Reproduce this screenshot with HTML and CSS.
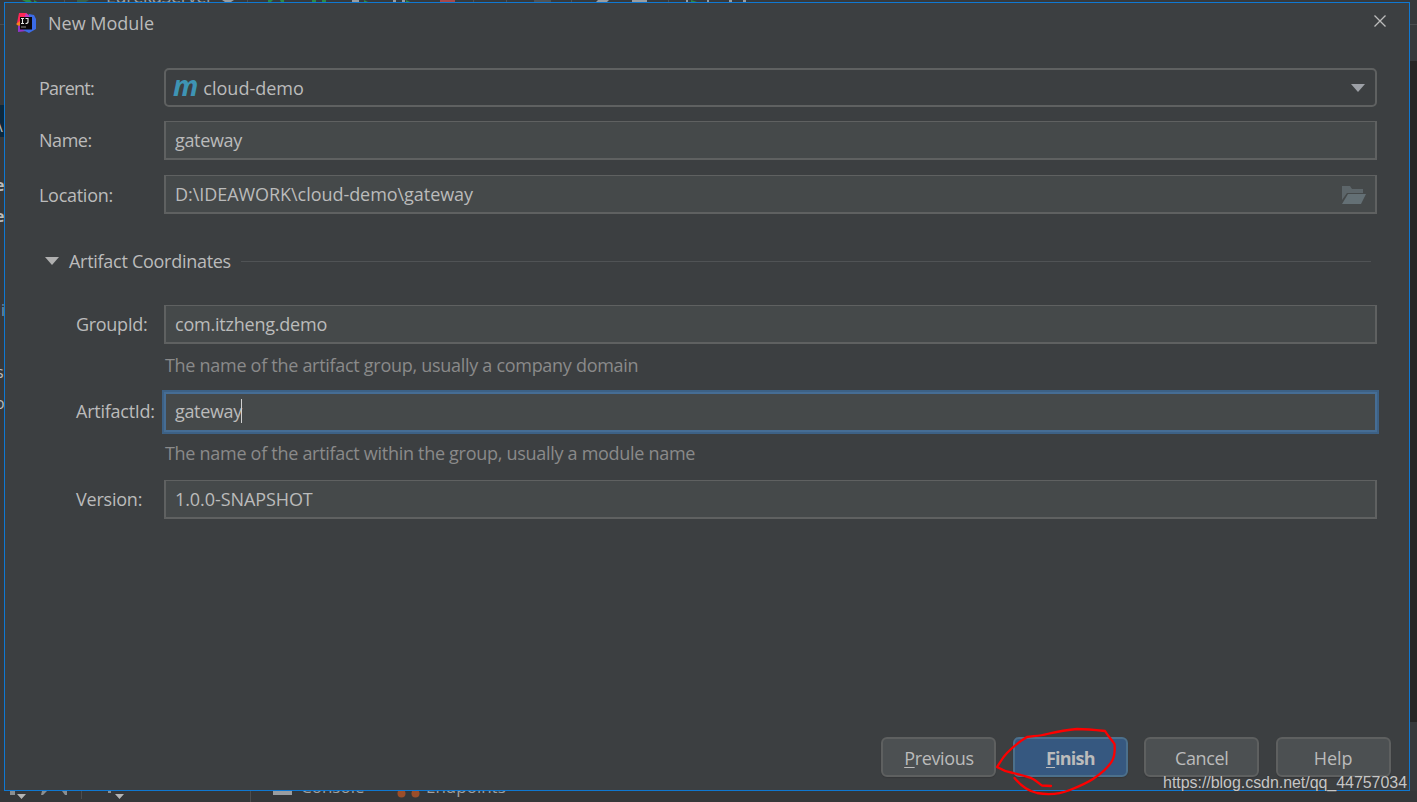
FILE: index.html
```html
<!DOCTYPE html>
<html lang="en">
<head>
  <meta charset="UTF-8">
  <title>New Module</title>
  <link rel="stylesheet" href="styles.css">
</head>
<body>

  <!-- IDE window behind the dialog -->
  <div class="ide">
    <svg class="ide-toolbar" width="1417" height="3">
      <path d="M22 0h8l3 3h-5zM34 0l5 3h-5zM268 0h5l-2 2h-3zM280 0h4v2h-3zM312 0h4v2h-4zM322 0h4v2h-4zM364 0l4 2h-4zM406 0l4 2h-4zM691 0l6 2h-6z" fill="#2f8a45"/>
      <path d="M77 0h12l-3 2h-9z" fill="#3d5f47"/>
      <path d="M222 0h12l-3 2h-6zM352 0h7v2h-7zM393 0h3v2h-3zM402 0h3v2h-3zM598 0h11l-2 2h-11zM632 0h15v2h-15zM686 0h2v2h-2zM707 0h2v2h-2zM729 0h3v2h-3zM743 0h3v2h-3z" fill="#9a9da0"/>
      <path d="M440 0h15v2h-15z" fill="#a8484a"/>
      <path d="M64 0h1v3h-1zM247 0h1v3h-1zM473 0h1v3h-1zM506 0h1v3h-1zM534 0h17v2h-17zM571 0h1v3h-1zM668 0h1v3h-1z" fill="#505355"/>
    </svg>
    <span class="run-config">EurekaServer</span>
    <div class="ide-side">
      <span class="side-sel">\</span>
      <span class="side-text side-e1">e</span>
      <span class="side-text side-e2">e</span>
      <span class="side-text side-i">i</span>
      <span class="side-text side-s">s</span>
      <span class="side-text side-o">o</span>
    </div>
    <div class="ide-right"></div>
    <div class="ide-bottom">
      <svg class="ide-bottom-icons" width="430" height="12">
        <path d="M10 0h5v4h-5zM42 0h5l-4 4h-2zM62 0h5v4h-2zM108 0h3v2h-3z" fill="#8b8e90"/>
        <path d="M17 3h9l-4.500 5zM115 3h9l-4.500 5z" fill="#b4b4b4"/>
        <path d="M81 0h1v8h-1zM250 0h1v12h-1z" fill="#4b4d4f"/>
        <path d="M273 0h19v4h-19z" fill="#9a9da0"/>
        <circle cx="401.500" cy="2.500" r="4" fill="#9b4e2a"/>
        <circle cx="415.500" cy="2.500" r="4" fill="#9b4e2a"/>
      </svg>
      <span class="tab tab-console">Console</span>
      <span class="tab tab-endpoints">Endpoints</span>
    </div>
  </div>

  <div class="dialog">
    <div class="titlebar">
      <svg class="logo" width="20" height="20" viewBox="0 0 20 20">
        <path d="M3 0h7l4 3-8 11-5-4z" fill="#fe2857"/>
        <path d="M0 11l4-3v6z" fill="#fc801d"/>
        <path d="M2 13l4-1 5 6-9 1z" fill="#9135c9"/>
        <path d="M13 1l5 1 2 4v10l-7 4-6-3z" fill="#3b6be6"/>
        <path d="M10 0l5 5h-7z" fill="#c23ac5"/>
        <path d="M4 4h12v12.500H4z" fill="#0b0709"/>
        <path d="M5 5.500h3M6.500 5.500v4.500M5 10.500h3M9.500 5.500h2.500v3.500q0 1.500-2.500 1.500" stroke="#e8e8e8" stroke-width="1.100" fill="none"/>
        <path d="M5 14h5" stroke="#8e8e8e" stroke-width="1"/>
      </svg>
      <span class="title">New Module</span>
      <svg class="close" width="12" height="12" viewBox="0 0 12 12">
        <path d="M.5 .5l11 11M11.500 .5l-11 11" stroke="#bcbcbc" stroke-width="1.300"/>
      </svg>
    </div>

    <div class="form">
      <div class="row">
        <label class="label"><span class="w-parent">Parent:</span></label>
        <div class="combo">
          <span class="maven">m</span>
          <span class="w-cloud">cloud-demo</span>
          <svg class="arrow" width="14" height="8"><path d="M0 0h14l-7 8z" fill="#9da0a6"/></svg>
        </div>
      </div>
      <div class="row">
        <label class="label label-up"><span class="w-name">Name:</span></label>
        <div class="field"><span class="w-gateway">gateway</span></div>
      </div>
      <div class="row">
        <label class="label"><span class="w-location">Location:</span></label>
        <div class="field">
          <span class="w-path">D:\IDEAWORK\cloud-demo\gateway</span>
          <svg class="folder" width="24" height="18" viewBox="0 0 24 18">
            <path d="M0 0h8l2 3h11v4H5L0 14z" fill="#5d666a"/>
            <path d="M6 8h18l-5 10H0z" fill="#647075"/>
          </svg>
        </div>
      </div>

      <div class="section">
        <svg width="14" height="8"><path d="M0 0h14l-7 8z" fill="#b0b0b0"/></svg>
        <span class="section-title">Artifact Coordinates</span>
        <div class="section-line"></div>
      </div>

      <div class="row sub">
        <label class="label label-up"><span class="w-group">GroupId:</span></label>
        <div class="field"><span class="w-com">com.itzheng.demo</span></div>
      </div>
      <div class="hint hint-group">The name of the artifact group, usually a company domain</div>
      <div class="row sub">
        <label class="label label-up"><span class="w-artifact">ArtifactId:</span></label>
        <div class="field focused"><span class="w-gateway">gateway</span><i class="caret"></i></div>
      </div>
      <div class="hint hint-artifact">The name of the artifact within the group, usually a module name</div>
      <div class="row sub">
        <label class="label label-up"><span class="w-version">Version:</span></label>
        <div class="field"><span class="w-snapshot">1.0.0-SNAPSHOT</span></div>
      </div>
    </div>

    <div class="footer">
      <button class="btn"><span class="w-previous"><u>P</u>revious</span></button>
      <button class="btn primary"><span class="w-finish"><u>F</u>inish</span></button>
      <button class="btn"><span class="w-cancel">Cancel</span></button>
      <button class="btn"><span>Help</span></button>
    </div>
  </div>

  <!-- hand-drawn mark around Finish -->
  <svg class="mark" width="130" height="80" viewBox="990 722 130 80">
    <path d="M1014.500 778C1021 786 1028 791 1037 793C1048 795 1060 794 1070 790C1080 786 1087 783 1093 779C1102 773 1108 768 1112 761C1115 756 1115 750 1114.500 744C1112 740 1108 736 1105 731C1096 730 1086 729 1077 729C1066 730 1056 732 1047 734C1040 736 1033 736 1027 737C1020 741 1013 747 1007 753C1002 758 1000 763 997 767C1002 770 1007 772 1013 773C1020 775 1027 776 1033 779C1037 781 1039 784 1042 785.500L1051 786" fill="none" stroke="#fe0000" stroke-width="2.300" stroke-linecap="round" stroke-linejoin="round"/>
  </svg>
  <div class="watermark">https://blog.csdn.net/qq_44757034</div>

</body>
</html>
```

FILE: styles.css
```css
body {
  margin: 0;
  width: 1417px;
  height: 802px;
  overflow: hidden;
  position: relative;
  background: #37393b;
  font-family: "Open Sans", "Noto Sans", sans-serif;
  font-size: 18px;
  line-height: 24px;
  color: #bbbbbb;
}
span {
  white-space: nowrap;
}
svg {
  display: block;
  flex: none;
}

/* IDE behind the dialog */
.ide {
  position: absolute;
  inset: 0;
  overflow: hidden;
}
.ide-toolbar {
  position: absolute;
  top: 0;
  left: 0;
}
.run-config {
  position: absolute;
  left: 106px;
  top: -16px;
  letter-spacing: -0.4px;
  color: #a0a0a0;
}
.ide-side {
  position: absolute;
  left: 0;
  top: 24px;
  width: 4px;
  height: 766px;
  overflow: hidden;
  border-top: 1px solid #4a4c4e;
  box-sizing: border-box;
}
.side-sel {
  position: absolute;
  top: 80px;
  left: 0;
  width: 4px;
  height: 32px;
  line-height: 42px;
  text-indent: -3px;
  font-size: 16px;
  background: #0d293e;
}
.side-text {
  position: absolute;
  left: -5px;
  font-size: 16px;
}
.side-e1 { top: 148px; font-weight: bold; }
.side-e2 { top: 179px; font-weight: bold; }
.side-i { top: 273px; left: 1px; color: #6897bb; }
.side-s { top: 335px; left: -4px; }
.side-o { top: 366px; }
.ide-right {
  position: absolute;
  left: 1410px;
  top: 24px;
  width: 7px;
  height: 698px;
  border-top: 1px solid #4a4c4e;
  box-sizing: border-box;
  background: linear-gradient(#37393b 36px, #262524 36px);
}
.ide-bottom {
  position: absolute;
  left: 0;
  top: 791px;
  width: 1417px;
  height: 11px;
  overflow: hidden;
  background: #353739;
}
.tab {
  position: absolute;
  top: -16px;
  font-size: 17px;
  color: #a0a0a0;
}
.tab-console { left: 301px; }
.tab-endpoints { left: 426px; }

/* dialog window */
.dialog {
  position: absolute;
  left: 4px;
  top: 2px;
  width: 1406px;
  height: 789px;
  box-sizing: border-box;
  border: 1px solid #0f78d2;
  background: #3c3f41;
  display: flex;
  flex-direction: column;
}
.titlebar {
  height: 41px;
  padding: 0 23px 0 11px;
  display: flex;
  align-items: center;
}
.logo {
  margin-bottom: 1px;
}
.title {
  margin: 0 0 2px 12px;
}
.close {
  margin-left: auto;
  margin-bottom: 5px;
}
.form {
  padding: 24px 32px 0 34px;
}
.row {
  display: flex;
  align-items: center;
  height: 39px;
  margin-bottom: 15px;
}
.row:first-child {
  margin-bottom: 14px;
}
.label {
  width: 125px;
  flex: none;
}
.label-up {
  padding-bottom: 1px;
}
.sub {
  padding-left: 37px;
  margin-bottom: 0;
}
.sub .label {
  width: 88px;
}
.field, .combo {
  flex: 1;
  height: 39px;
  box-sizing: border-box;
  border: 2px solid #5f6161;
  padding: 0 9px;
  display: flex;
  align-items: center;
}
.field {
  border-top-width: 1px;
  background: #45494a;
}
.combo {
  border-radius: 5px;
  padding: 0 10px 0 7px;
}
.maven {
  font: italic bold 28px/24px "Open Sans", sans-serif;
  color: #3e94b4;
  margin: -5px 5px 0 0;
}
.arrow, .folder {
  margin-left: auto;
}
.folder {
  margin-top: 2px;
}
.focused {
  height: 40px;
  border: 2px solid #466d94;
  box-shadow: 0 0 0 2px #3d6185;
}
.focused .w-gateway {
  margin-bottom: 1px;
}
.caret {
  width: 1px;
  height: 24px;
  margin: 0 0 1px -1px;
  background: #d0d0d0;
}
.section {
  display: flex;
  align-items: center;
  height: 24px;
  margin: 35px 0 32px;
  padding: 0 6px;
}
.section-title {
  margin: 0 10px;
  letter-spacing: -0.28px;
}
.section-line {
  flex: 1;
  height: 1px;
  background: #505355;
}
.hint {
  padding-left: 126px;
  color: #8a8a8a;
  box-sizing: border-box;
  letter-spacing: -0.29px;
}
.hint-group {
  height: 48px;
  padding-top: 9px;
}
.hint-artifact {
  height: 49px;
  padding-top: 10px;
}

/* text widths */
.w-parent { letter-spacing: -0.8px; }
.w-name { letter-spacing: -0.45px; }
.w-location { letter-spacing: -0.28px; }
.w-gateway { letter-spacing: -0.35px; }
.w-path { letter-spacing: -0.05px; }
.w-group { letter-spacing: -0.33px; }
.w-com { letter-spacing: -0.22px; }
.w-artifact { letter-spacing: -0.25px; }
.w-version { letter-spacing: -0.22px; }
.w-snapshot { letter-spacing: -0.08px; }
.w-previous { letter-spacing: -0.35px; }
.w-finish { letter-spacing: -0.8px; }
.w-cancel { letter-spacing: -0.35px; }

.footer {
  display: flex;
  justify-content: flex-end;
  gap: 16.4px;
  margin-top: auto;
  padding: 0 18.4px 13px 0;
}
.btn {
  width: 115px;
  height: 40px;
  padding: 2px 0 0;
  border: 2px solid #5e6060;
  border-radius: 6px;
  background: #4c5052;
  box-shadow: 0 1px 1px #353739;
  color: #bbbbbb;
  font: inherit;
}
.btn u {
  text-underline-offset: 2px;
  text-decoration-thickness: 1px;
}
.primary {
  background: #365880;
  border-color: #4c708c;
  font-weight: bold;
}

.mark {
  position: absolute;
  left: 990px;
  top: 722px;
}
.watermark {
  position: absolute;
  right: 10px;
  top: 771px;
  font-family: "Liberation Sans", sans-serif;
  font-size: 16px;
  letter-spacing: -0.05px;
  color: #c6c6c6;
  text-shadow: 0 0 1px #333;
}
```
